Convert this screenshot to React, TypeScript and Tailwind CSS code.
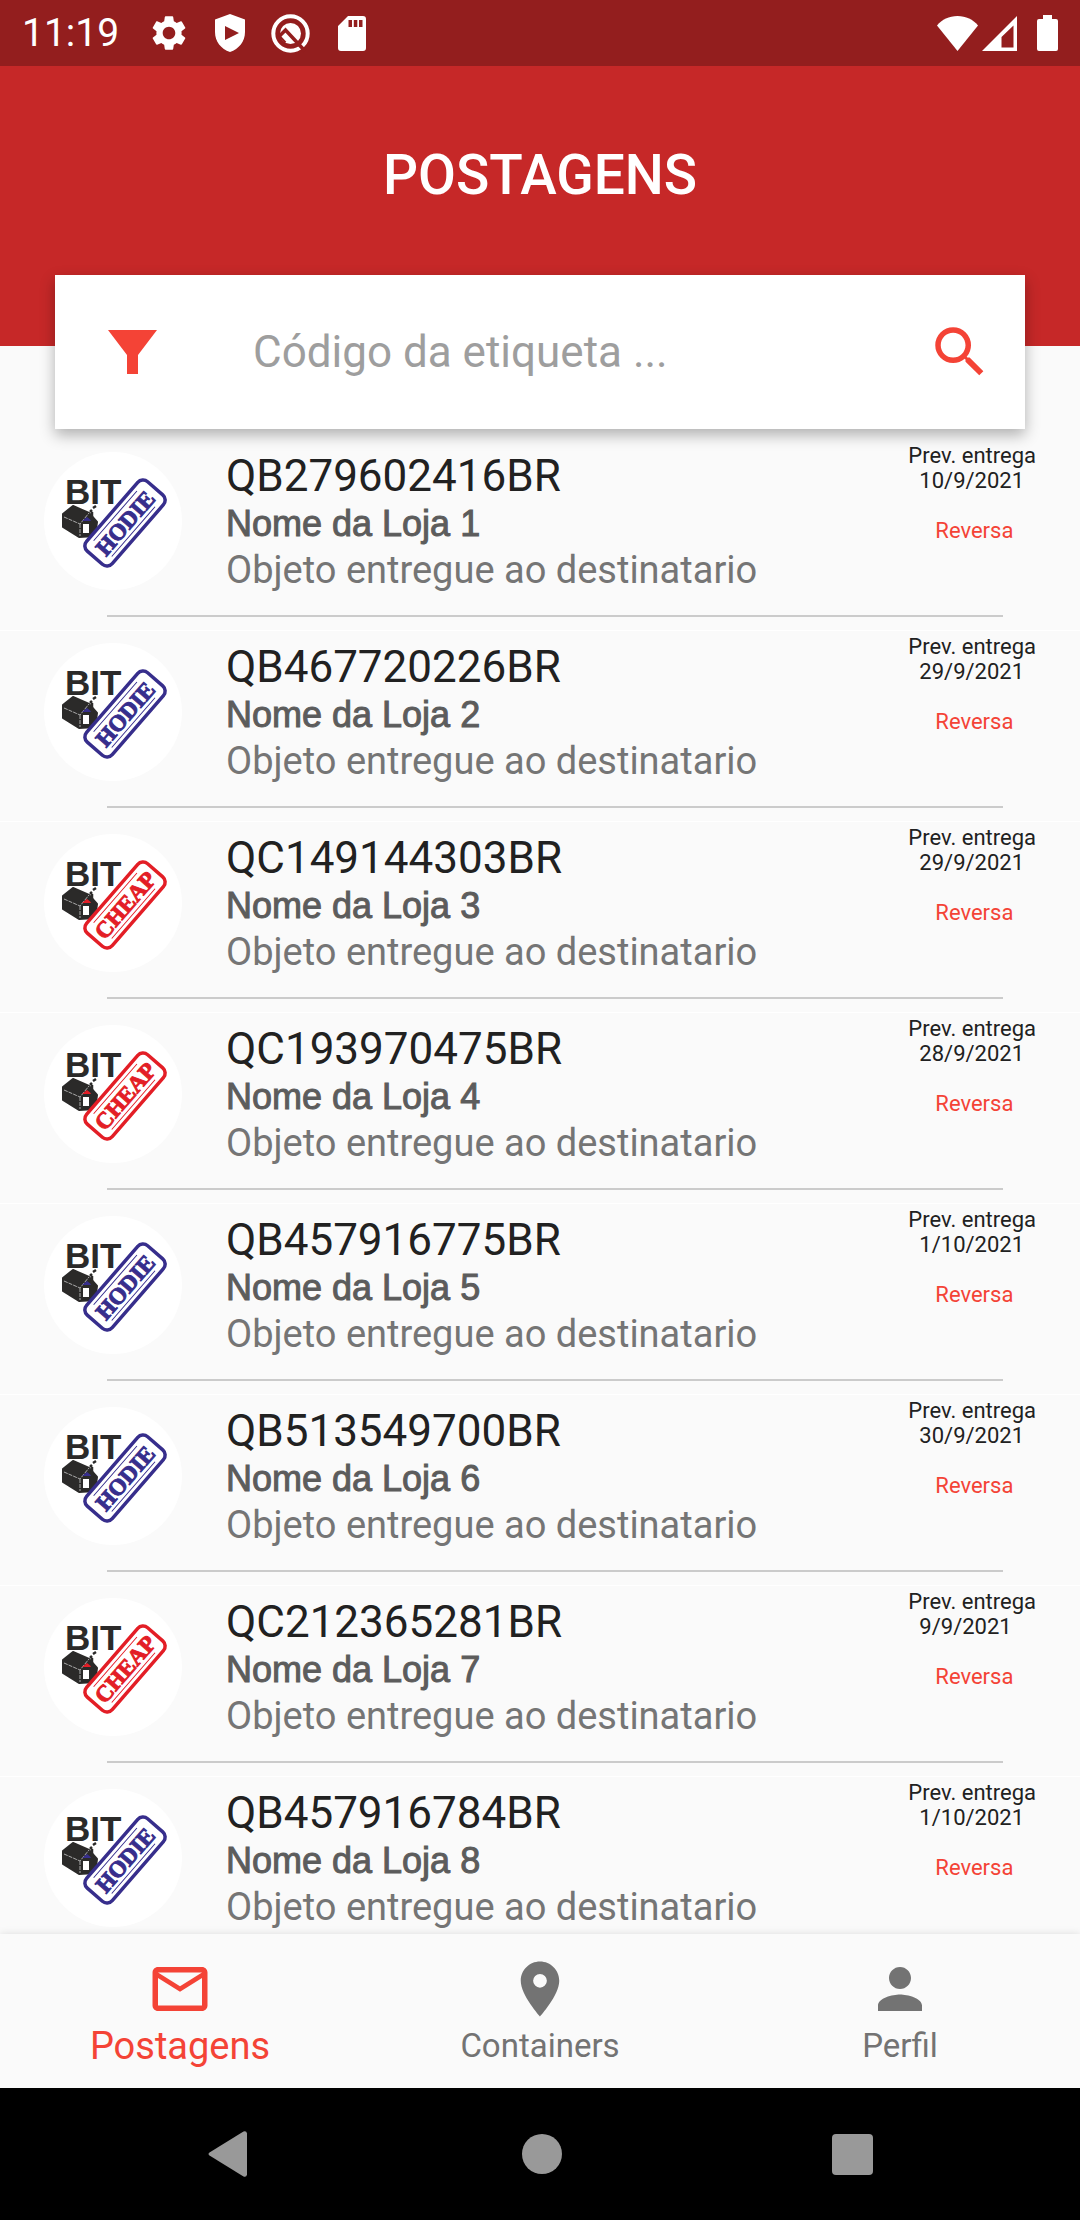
import React, { useState } from 'react';
import { MdLocationOn, MdMailOutline, MdPerson, MdSearch, MdSettings } from 'react-icons/md';

type Store = 'hodie' | 'cheap';

interface Postagem {
  code: string;
  store: Store;
  name: string;
  date: string;
}

const postagens: Postagem[] = [
  { code: 'QB279602416BR', store: 'hodie', name: 'Nome da Loja 1', date: '10/9/2021' },
  { code: 'QB467720226BR', store: 'hodie', name: 'Nome da Loja 2', date: '29/9/2021' },
  { code: 'QC149144303BR', store: 'cheap', name: 'Nome da Loja 3', date: '29/9/2021' },
  { code: 'QC193970475BR', store: 'cheap', name: 'Nome da Loja 4', date: '28/9/2021' },
  { code: 'QB457916775BR', store: 'hodie', name: 'Nome da Loja 5', date: '1/10/2021' },
  { code: 'QB513549700BR', store: 'hodie', name: 'Nome da Loja 6', date: '30/9/2021' },
  { code: 'QC212365281BR', store: 'cheap', name: 'Nome da Loja 7', date: '9/9/2021' },
  { code: 'QB457916784BR', store: 'hodie', name: 'Nome da Loja 8', date: '1/10/2021' },
];

const StatusBar: React.FC = () => (
  <div className="flex h-[66px] shrink-0 items-center justify-between bg-[#931e1e] px-[22px] text-white">
    <div className="flex items-center">
      <span className="w-24 text-[39px] leading-none">11:19</span>
      <MdSettings className="ml-[30px] size-[42px]" />
      {/* play protect */}
      <svg className="ml-6 h-[38px] w-8" viewBox="0 0 32 38" fill="currentColor">
        <path fillRule="evenodd" d="M16 0 31 5.500V18c0 9.500-6 17-15 20C7 35 1 27.500 1 18V5.500zM11 12v14l14-7z" />
      </svg>
      <svg className="ml-[25px] size-[39px]" viewBox="0 0 39 39" fill="none">
        <circle cx="19.500" cy="19.500" r="17.200" stroke="currentColor" strokeWidth="4" />
        <circle cx="19.500" cy="19.500" r="10.500" fill="currentColor" />
        <path d="M8 22.500l6.500-6.500L34 37" stroke="#931e1e" strokeWidth="3.600" />
        <path d="M8.500 22l6 6.500" stroke="#931e1e" strokeWidth="2" />
      </svg>
      <svg className="ml-7 h-[35px] w-7" viewBox="0 0 28 35" fill="currentColor">
        <path fillRule="evenodd" d="M10 0h15a3 3 0 0 1 3 3v29a3 3 0 0 1-3 3H3a3 3 0 0 1-3-3V10zM10.500 4v7h3.500V4zM15.800 4v7h3.500V4zM21 4v7h3.500V4z" />
      </svg>
    </div>
    <div className="flex items-center">
      <svg className="h-[35px] w-[41px]" viewBox="0 0 41 35" fill="currentColor">
        <path d="M20.500 35 0 9.500C5 3.500 12 0 20.500 0S36 3.500 41 9.500z" />
      </svg>
      <svg className="ml-1 size-[35px]" viewBox="0 0 35 35" fill="currentColor">
        <path fillRule="evenodd" d="M35 0v35H0zM31.500 9.500 19.500 21v10.500h12z" />
      </svg>
      <svg className="ml-5 h-9 w-[21px]" viewBox="0 0 21 36" fill="currentColor">
        <path d="M6 0h9v4h4a2 2 0 0 1 2 2v28a2 2 0 0 1-2 2H2a2 2 0 0 1-2-2V6a2 2 0 0 1 2-2h4z" />
      </svg>
    </div>
  </div>
);

const StoreLogo: React.FC<{ store: Store }> = ({ store }) => {
  const color = store === 'hodie' ? '#372e8c' : '#e31e26';

  return (
    <div className="size-[138px] shrink-0 overflow-hidden rounded-full bg-white">
      <svg className="size-full" viewBox="0 0 138 138">
        <text x="21" y="52" fontSize="35" fontWeight="700" fontFamily="Liberation Sans, sans-serif" fill="#2b2a29">
          BIT
        </text>
        {/* little house with its chimney */}
        <path d="M19 62l10-8 16 7 8 9-2 14-16 1-16-10z" fill="#2b2a29" stroke="#2b2a29" strokeWidth="2" strokeLinejoin="round" />
        <path d="M20 65l16 7 9-11M36 72v12" fill="none" stroke="#aaa" strokeWidth="1" strokeDasharray="4 1" />
        <path d="M38 69l5-4 5 4z" fill={color} />
        <path d="M39 72h6v9h-6z" fill="#fff" />
        <path d="M46 60l2-2M49 56l3-2M48 60v11" stroke="#2b2a29" strokeWidth="2.500" />
        <g transform="translate(81 71) rotate(-49)">
          <rect x="-46" y="-17" width="92" height="34" rx="7" fill="#fff" stroke={color} strokeWidth="3.500" />
          <path d="M-34-12h66M-34 12h66" stroke={color} strokeWidth="1" />
          <text
            y="8"
            textAnchor="middle"
            fontSize="23"
            fontWeight="700"
            fontFamily="Liberation Serif, serif"
            fill={color}
            stroke={color}
            strokeWidth="1"
            textRendering="geometricPrecision"
          >
            {store === 'hodie' ? 'HODIE' : 'CHEAP'}
          </text>
        </g>
      </svg>
    </div>
  );
};

const PostagemItem: React.FC<{ item: Postagem }> = ({ item }) => (
  <li className="flex h-[191px] flex-col border-b border-white">
    <div className="flex h-[175px] shrink-0 pl-[44px]">
      <div className="flex grow pt-3">
        <StoreLogo store={item.store} />
        <div className="ml-11">
          <h2 className="text-[44px] leading-[48px] text-[#212121]">{item.code}</h2>
          <p className="font-['Liberation_Sans',sans-serif] text-[36px] leading-[48px] text-[#5c5c5c] [-webkit-text-stroke:1px_#5c5c5c]">
            {item.name}
          </p>
          <p className="text-[38px] leading-[44px] text-[#757575]">Objeto entregue ao destinatario</p>
        </div>
      </div>
      <div className="mr-11 flex flex-col pt-[3px] text-[22px] leading-[25px] text-[#212121]">
        <span>Prev. entrega</span>
        <span className="pl-[11px]">{item.date}</span>
        <span className="mt-[25px] pl-[27px] text-[#f44336]">Reversa</span>
      </div>
    </div>
    <hr className="mr-[77px] ml-[107px] border-t-2 border-[#cbcbcb]" />
  </li>
);

const tabs = [
  { label: 'Postagens', Icon: MdMailOutline },
  { label: 'Containers', Icon: MdLocationOn },
  { label: 'Perfil', Icon: MdPerson },
];

const App: React.FC = () => {
  const [search, setSearch] = useState('');
  const [active, setActive] = useState('Postagens');

  return (
    <div className="flex h-screen flex-col overflow-hidden bg-[#fafafa] font-[Roboto,sans-serif]">
      <StatusBar />

      <header className="h-[280px] shrink-0 bg-[#c62828] px-[55px] pt-[77px]">
        <h1 className="text-center text-[55px] leading-[64px] font-medium text-white">POSTAGENS</h1>
        <form
          className="relative z-10 mt-[68px] flex h-[154px] items-center bg-white pr-8 pl-[53px] shadow-[0_6px_14px_rgba(0,0,0,0.3)]"
          onSubmit={(e) => e.preventDefault()}
        >
          <button type="button" aria-label="Filtrar">
            <svg className="h-11 w-[49px]" viewBox="0 0 49 44" fill="#f44336">
              <path d="M0 0h49L30 25v19H19V25z" />
            </svg>
          </button>
          <input
            type="text"
            aria-label="Código da etiqueta"
            placeholder="Código da etiqueta ..."
            value={search}
            onChange={(e) => setSearch(e.target.value)}
            className="ml-24 min-w-0 grow text-[44px] text-[#212121] outline-none placeholder:text-[#9e9e9e]"
          />
          <button type="submit" aria-label="Buscar">
            <MdSearch className="size-[66px] text-[#f44336]" />
          </button>
        </form>
      </header>

      <main className="min-h-0 grow overflow-hidden pt-[94px]">
        <ul>
          {postagens.map((item) => (
            <PostagemItem key={item.code} item={item} />
          ))}
        </ul>
      </main>

      <nav className="z-10 grid h-[154px] shrink-0 grid-cols-3 bg-[#fafafa] shadow-[0_0_8px_rgba(0,0,0,0.12)]">
        {tabs.map(({ label, Icon }) => (
          <button
            key={label}
            type="button"
            onClick={() => setActive(label)}
            className={`flex flex-col items-center pt-[22px] ${active === label ? 'text-[38px] text-[#f44336]' : 'text-[33px] text-[#737373]'}`}
          >
            <Icon className="size-[66px]" />
            <span className="leading-[48px]">{label}</span>
          </button>
        ))}
      </nav>

      {/* system navigation */}
      <div className="flex h-[132px] shrink-0 items-center justify-center gap-[270px] bg-black text-[#999999]">
        <button type="button" aria-label="Voltar">
          <svg className="h-[46px] w-11" viewBox="0 0 44 46" fill="currentColor">
            <path d="M35.500.5 1.500 21.500q-2 1.500 0 3l34 21q3 1 3.500-2V2.500q-.5-3-3.500-2z" />
          </svg>
        </button>
        <button type="button" aria-label="Início" className="size-10 rounded-full bg-[#999999]" />
        <button type="button" aria-label="Recentes" className="size-[41px] rounded-sm bg-[#999999]" />
      </div>
    </div>
  );
};

export default App;
